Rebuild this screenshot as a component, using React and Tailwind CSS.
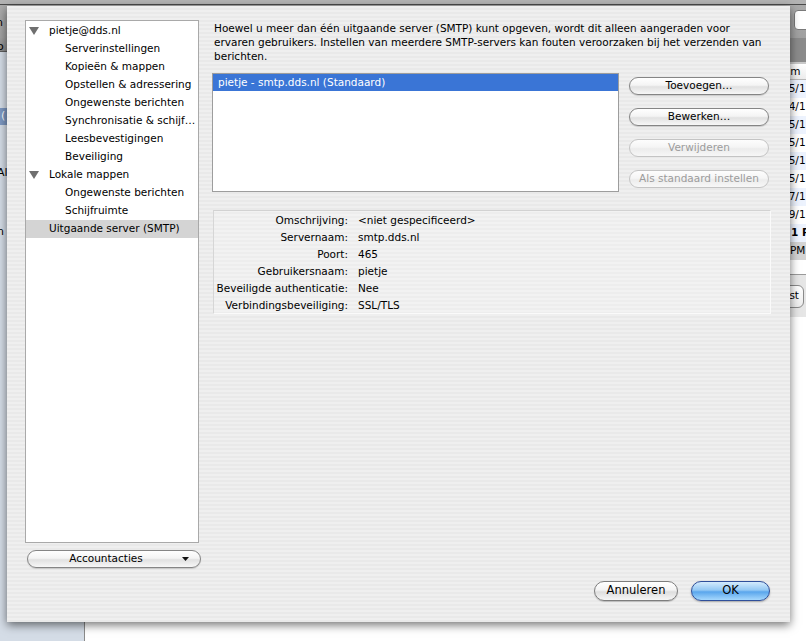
import React from 'react'

const TREE = [
  { label: 'pietje@dds.nl', level: 0 },
  { label: 'Serverinstellingen', level: 1 },
  { label: 'Kopieën & mappen', level: 1 },
  { label: 'Opstellen & adressering', level: 1 },
  { label: 'Ongewenste berichten', level: 1 },
  { label: 'Synchronisatie & schijf…', level: 1 },
  { label: 'Leesbevestigingen', level: 1 },
  { label: 'Beveiliging', level: 1 },
  { label: 'Lokale mappen', level: 0 },
  { label: 'Ongewenste berichten', level: 1 },
  { label: 'Schijfruimte', level: 1 },
  { label: 'Uitgaande server (SMTP)', level: 2, selected: true },
]

const DETAILS = [
  ['Omschrijving:', '<niet gespecificeerd>'],
  ['Servernaam:', 'smtp.dds.nl'],
  ['Poort:', '465'],
  ['Gebruikersnaam:', 'pietje'],
  ['Beveiligde authenticatie:', 'Nee'],
  ['Verbindingsbeveiliging:', 'SSL/TLS'],
]

// background mail list, only the left end of the date column peeks out
const ROWS = ['25/11/07', '24/11/07', '25/11/07', '25/11/07', '25/11/07', '25/11/07', '27/11/07', '29/11/07']

function Disclosure() {
  return (
    <svg width="10" height="8" viewBox="0 0 10 8" className="shrink-0">
      <polygon points="0,0 10,0 5,8" fill="#6f6f6f" />
    </svg>
  )
}

function AquaButton({ children, disabled, className = '' }) {
  return (
    <div
      className={
        'flex h-[18px] items-center justify-center rounded-full border text-[10.5px] ' +
        (disabled
          ? 'border-[#c4c4c4] text-[#9c9c9c] bg-[linear-gradient(180deg,#fdfdfd_0%,#f5f5f5_45%,#ececec_55%,#f7f7f7_100%)] '
          : 'border-[#858585] text-black bg-[linear-gradient(180deg,#ffffff_0%,#f4f4f4_45%,#e1e1e1_55%,#f7f7f7_100%)] shadow-[0_1px_1px_rgba(0,0,0,0.15)] ') +
        className
      }
    >
      {children}
    </div>
  )
}

export default function App() {
  return (
    <div className="relative h-[641px] w-[806px] overflow-hidden bg-white font-['DejaVu_Sans',sans-serif] text-black">
      {/* ── Background window ─────────────────────────── */}
      <div className="flex h-full flex-col">
        <div className="relative h-[38px] shrink-0 bg-[linear-gradient(180deg,#acacac_0%,#a0a0a0_100%)]">
          <div className="h-[5px] border-b border-[#4a4a4a] bg-[#b3b3b3]" />
          <span className="absolute left-[-4px] top-[15px] text-[11px]">n</span>
          <div className="absolute left-[794px] top-[10px] h-[20px] w-[30px] rounded-l-[4px] border border-[#7a7a7a] bg-white" />
        </div>
        <div className="flex flex-1">
          <div className="flex w-[85px] shrink-0 flex-col border-r border-[#8a8a8a] bg-[#d4dce6] text-[11px]">
            <div className="relative h-[14px] border-b border-[#5e5e5e] bg-[linear-gradient(180deg,#9e9e9e,#8c8c8c)]">
              <span className="absolute left-[-3px] top-[1px]">o</span>
            </div>
            <div className="mt-[56px] flex h-[17px] items-center bg-[#7d98c2] pl-[1px] text-white">(</div>
            <div className="ml-[-3px] mt-[40px]">All</div>
            <div className="ml-[-3px] mt-[42px]">n</div>
          </div>
          <div className="flex flex-1 flex-col">
            <div className="h-[24px] bg-[#8b8b8b]" />
            <div className="h-[2px] bg-[#c9c9c9]" />
            <div className="flex h-[16px] items-center border-b border-[#b9b9b9] bg-[linear-gradient(180deg,#ffffff,#ececec)] pl-[680px] text-[10.5px]">
              Datum
            </div>
            {ROWS.map((r, i) => (
              <div
                key={i}
                className={'flex h-[18px] items-center pl-[697px] text-[10.5px] ' + (i % 2 === 0 ? 'bg-[#edf3fe]' : 'bg-white')}
              >
                {r}
              </div>
            ))}
            <div className="flex h-[18px] items-center bg-[#edf3fe] pl-[706px] text-[10.5px] font-bold">1 PM</div>
            <div className="flex h-[18px] items-center bg-[#d4d4d4] pl-[695px] text-[10.5px]">1 PM</div>
            <div className="h-[15px] border-b border-[#9a9a9a]" />
            <div className="flex h-[42px] items-center gap-[3px] bg-[#e6e6e6] pl-[669px]">
              <div className="flex h-[23px] w-[50px] items-center justify-end rounded-[6px] border border-[#8a8a8a] bg-[linear-gradient(180deg,#fff,#ececec)] pr-[4px] text-[10.5px]">
                Test
              </div>
              <div className="h-[23px] w-[30px] rounded-[6px] border border-[#8a8a8a] bg-[linear-gradient(180deg,#fff,#ececec)]" />
            </div>
            <div className="flex-1 bg-white" />
          </div>
        </div>
      </div>

      {/* ── Sheet ─────────────────────────────────────── */}
      <div className="absolute left-[7px] top-[6px] flex h-[616px] w-[783px] gap-[13px] bg-[repeating-linear-gradient(180deg,#efefef_0px,#efefef_2px,#e9e9e9_2px,#e9e9e9_4px)] pb-[21px] pl-[18px] pr-[19px] pt-[14px] shadow-[0_3px_9px_rgba(0,0,0,0.55)]">
        {/* left column */}
        <div className="flex w-[174px] shrink-0 flex-col">
          <div className="h-[523px] border border-[#a9a9a9] bg-white pt-[1px] text-[10.5px]">
            {TREE.map((t, i) => (
              <div
                key={i}
                className={'flex h-[18px] items-center whitespace-nowrap ' + (t.selected ? 'bg-[#d4d4d4]' : '')}
              >
                {t.level === 0 && (
                  <div className="flex w-[23px] justify-start pl-[3px]">
                    <Disclosure />
                  </div>
                )}
                {t.level === 1 && <div className="w-[39px] shrink-0" />}
                {t.level === 2 && <div className="w-[23px] shrink-0" />}
                <span>{t.label}</span>
              </div>
            ))}
          </div>
          <div className="relative ml-[2px] mt-[7px] w-[174px]">
            <AquaButton className="pr-[16px]">Accountacties</AquaButton>
            <svg width="7" height="4" viewBox="0 0 7 4" className="absolute right-[12px] top-[7px]">
              <polygon points="0,0 7,0 3.5,4" fill="#111" />
            </svg>
          </div>
        </div>

        {/* right column */}
        <div className="flex flex-1 flex-col">
          <p className="mt-[1px] whitespace-nowrap pl-[2px] text-[10.5px] leading-[14px]">
            Hoewel u meer dan één uitgaande server (SMTP) kunt opgeven, wordt dit alleen aangeraden voor
            <br />
            ervaren gebruikers. Instellen van meerdere SMTP-servers kan fouten veroorzaken bij het verzenden van
            <br />
            berichten.
          </p>

          <div className="mt-[10px] flex">
            <div className="h-[119px] w-[407px] border border-[#9d9d9d] bg-white text-[10.5px]">
              <div className="flex h-[17px] items-center bg-[#3a75d6] pl-[5px] text-white">
                pietje - smtp.dds.nl (Standaard)
              </div>
            </div>
            <div className="ml-[10px] flex w-[140px] flex-col gap-[13px] pt-[4px]">
              <AquaButton>Toevoegen…</AquaButton>
              <AquaButton>Bewerken…</AquaButton>
              <AquaButton disabled>Verwijderen</AquaButton>
              <AquaButton disabled>Als standaard instellen</AquaButton>
            </div>
          </div>

          <div className="ml-[1px] mt-[18px] h-[104px] border-b border-l border-r border-t border-b-[#fafafa] border-l-[#d6d6d6] border-r-[#fafafa] border-t-[#d2d2d2] bg-[rgba(255,255,255,0.18)] pt-[1px] text-[10.5px]">
            {DETAILS.map(([k, v]) => (
              <div key={k} className="flex h-[17px] items-center">
                <span className="w-[134px] shrink-0 whitespace-nowrap text-right">{k}</span>
                <span className="ml-[10px]">{v}</span>
              </div>
            ))}
          </div>

          <div className="mt-auto flex justify-end gap-[13px] pr-[1px]">
            <div className="flex h-[20px] w-[84px] items-center justify-center rounded-full border border-[#7d7d7d] bg-[linear-gradient(180deg,#ffffff_0%,#f3f3f3_45%,#dedede_55%,#f6f6f6_100%)] text-[11.5px] shadow-[0_1px_1px_rgba(0,0,0,0.2)]">
              Annuleren
            </div>
            <div className="flex h-[20px] w-[79px] items-center justify-center rounded-full border border-[#2f4f9a] bg-[linear-gradient(180deg,#d4ebfd_0%,#93c8f4_45%,#5aa6ec_55%,#a6d8fd_100%)] text-[11.5px] shadow-[0_1px_2px_rgba(0,0,0,0.3)]">
              OK
            </div>
          </div>
        </div>
      </div>
    </div>
  )
}
